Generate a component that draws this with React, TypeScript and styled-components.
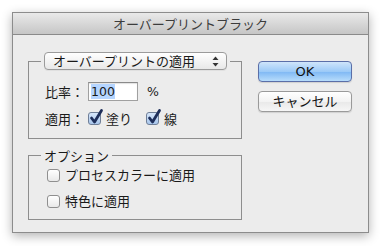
import * as React from 'react'
import styled, { createGlobalStyle } from 'styled-components'

const GlobalStyle = createGlobalStyle`
  html, body {
    margin: 0;
    padding: 0;
    background: #ffffff;
  }
  body {
    font-family: 'Noto Sans CJK JP', 'DejaVu Sans', sans-serif;
    font-size: 13px;
    color: #1a1a1a;
  }
`

const Page = styled.div`
  padding: 12px;
  width: 381px;
  height: 246px;
  box-sizing: border-box;
`

const Window = styled.div`
  width: 357px;
  height: 221px;
  box-sizing: border-box;
  border: 1px solid #8c8c8c;
  background: #ececec;
  box-shadow: 0 3px 10px rgba(0, 0, 0, 0.3);
  display: flex;
  flex-direction: column;
`

const TitleBar = styled.div`
  height: 21px;
  flex: none;
  border-bottom: 1px solid #8a8a8a;
  background: linear-gradient(#e9e9e9, #c6c6c6);
  display: flex;
  align-items: center;
  justify-content: center;
  font-size: 13px;
  line-height: 21px;
  color: #3c3c3c;
`

const Body = styled.div`
  display: flex;
  gap: 16px;
  padding: 17px 16px 0 15px;
`

const LeftColumn = styled.div`
  width: 214px;
  display: flex;
  flex-direction: column;
  gap: 9px;
`

const Group = styled.fieldset<{ $bottom: number }>`
  margin: 0;
  padding: 0 0 ${({ $bottom }) => $bottom}px 0;
  border: 1px solid #8e8e8e;
  min-width: 0;
`

const GroupContent = styled.div<{ $left: number }>`
  padding-left: ${({ $left }) => $left}px;
`

const Legend = styled.legend`
  margin-left: 12px;
  padding: 0 3px;
  line-height: 15px;
  font-size: 13px;
`

const Popup = styled.div`
  width: 183px;
  height: 18px;
  box-sizing: border-box;
  border: 1px solid #9b9b9b;
  border-radius: 4px;
  background: linear-gradient(#ffffff, #f1f1f1 60%, #e8e8e8);
  box-shadow: 0 1px 0 rgba(0, 0, 0, 0.05);
  display: flex;
  align-items: center;
  justify-content: space-between;
  padding: 0 7px 0 8px;
  font-size: 13px;
  line-height: 16px;
`

const Row = styled.div<{ $top: number }>`
  display: flex;
  align-items: center;
  margin-top: ${({ $top }) => $top}px;
  height: 19px;
`

const Label = styled.span`
  width: 43px;
  flex: none;
  line-height: 16px;
`

const Field = styled.div`
  width: 50px;
  height: 19px;
  box-sizing: border-box;
  border: 1px solid #a0a0a0;
  border-top-color: #8a8a8a;
  background: #ffffff;
  box-shadow: inset 0 1px 1px rgba(0, 0, 0, 0.12);
  display: flex;
  align-items: center;
  padding-left: 2px;
  font-family: 'DejaVu Sans', sans-serif;
  font-size: 12.5px;
`

const Selection = styled.span`
  background: #b5d5ff;
  line-height: 15px;
`

const Unit = styled.span`
  margin-left: 9px;
  font-family: 'DejaVu Sans', sans-serif;
  font-size: 12.5px;
`

const CheckLabel = styled.label<{ $gap?: number }>`
  display: flex;
  align-items: center;
  margin-right: ${({ $gap }) => $gap ?? 0}px;
  line-height: 16px;
`

const Box = styled.span<{ $checked?: boolean }>`
  position: relative;
  width: 13px;
  height: 13px;
  box-sizing: border-box;
  flex: none;
  border-radius: 3px;
  border: 1px solid ${({ $checked }) => ($checked ? '#6f7f98' : '#8f8f8f')};
  background: ${({ $checked }) =>
    $checked
      ? 'linear-gradient(#d6e6fa, #a8c6ec)'
      : 'linear-gradient(#ffffff, #e9e9e9)'};
  margin-right: 5px;
`

const Tick = styled.svg`
  position: absolute;
  left: 1px;
  top: -3px;
  overflow: visible;
`

const OptionRow = styled.div<{ $top: number }>`
  display: flex;
  margin-top: ${({ $top }) => $top}px;
`

const RightColumn = styled.div`
  display: flex;
  flex-direction: column;
  gap: 9px;
  padding-top: 9px;
`

const Button = styled.button<{ $default?: boolean }>`
  width: 94px;
  height: 21px;
  box-sizing: border-box;
  border-radius: 4px;
  border: 1px solid ${({ $default }) => ($default ? '#5b6fa8' : '#9a9a9a')};
  background: ${({ $default }) =>
    $default
      ? 'linear-gradient(#cfe5fb, #9ccaf7 50%, #7fb8f4 52%, #b7dcfb)'
      : 'linear-gradient(#ffffff, #f3f3f3 50%, #e9e9e9 52%, #f6f6f6)'};
  box-shadow: 0 1px 1px rgba(0, 0, 0, 0.12);
  padding: 0;
  font-family: 'DejaVu Sans', 'Noto Sans CJK JP', sans-serif;
  font-size: 13px;
  line-height: 19px;
  color: #111;
`

const Check = ({ checked, children, gap }: { checked?: boolean; children: React.ReactNode; gap?: number }) => (
  <CheckLabel $gap={gap}>
    <Box $checked={checked}>
      {checked && (
        <Tick width="12" height="14" viewBox="0 0 12 14">
          <path d="M1.5 8 L4.5 12 L11.5 0.5" fill="none" stroke="#1d2e5a" strokeWidth="2.8" strokeLinecap="round" strokeLinejoin="round" />
        </Tick>
      )}
    </Box>
    <span>{children}</span>
  </CheckLabel>
)

const Arrows = () => (
  <svg width="7" height="11" viewBox="0 0 7 11">
    <path d="M3.5 0.5 L6.5 4 L0.5 4 Z" fill="#333" />
    <path d="M3.5 10.5 L6.5 7 L0.5 7 Z" fill="#333" />
  </svg>
)

const App: React.FunctionComponent = () => {
  return (
    <Page>
      <GlobalStyle />
      <Window>
        <TitleBar>オーバープリントブラック</TitleBar>
        <Body>
          <LeftColumn>
            <Group $bottom={10}>
              <Legend>
                <Popup>
                  <span>オーバープリントの適用</span>
                  <Arrows />
                </Popup>
              </Legend>
              <GroupContent $left={16}>
                <Row $top={12}>
                  <Label>比率：</Label>
                  <Field>
                    <Selection>100</Selection>
                  </Field>
                  <Unit>%</Unit>
                </Row>
                <Row $top={8}>
                  <Label>適用：</Label>
                  <Check checked gap={14}>塗り</Check>
                  <Check checked>線</Check>
                </Row>
              </GroupContent>
            </Group>
            <Group $bottom={10}>
              <Legend>オプション</Legend>
              <GroupContent $left={18}>
                <OptionRow $top={4}>
                  <Check>プロセスカラーに適用</Check>
                </OptionRow>
                <OptionRow $top={10}>
                  <Check>特色に適用</Check>
                </OptionRow>
              </GroupContent>
            </Group>
          </LeftColumn>
          <RightColumn>
            <Button $default>OK</Button>
            <Button>キャンセル</Button>
          </RightColumn>
        </Body>
      </Window>
    </Page>
  )
}

export default App
